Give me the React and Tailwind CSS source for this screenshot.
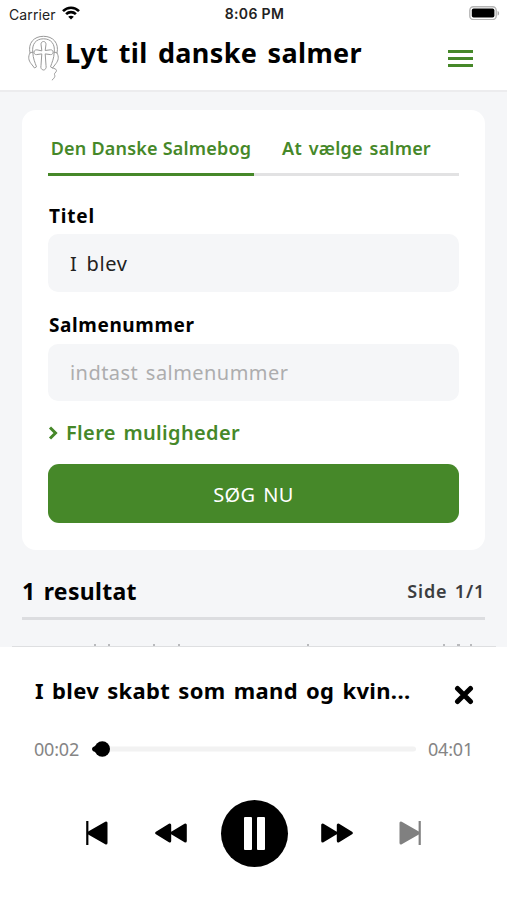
import { useState } from 'react';

function StatusBar() {
  return (
    <div className="grid h-7 grid-cols-3 items-center pl-[9px] pr-[7px] font-['Inter',sans-serif] text-[14px]">
      <div className="flex items-center gap-[6px] text-[#222]">
        <span className="tracking-[0.1px]">Carrier</span>
        <svg className="-mt-[2px]" width="18" height="14" viewBox="0 0 18 14" fill="none" stroke="#000" strokeWidth="2.6">
          <path d="M1 5.2C5.5.6 12.5.6 17 5.2" />
          <path d="M4.1 8.2c2.8-2.8 7-2.8 9.8 0" />
          <path d="M9 13.6 6.2 10.8c1.6-1.5 4-1.5 5.6 0Z" fill="#000" stroke="none" />
        </svg>
      </div>
      <span className="whitespace-nowrap pb-px text-center text-[14px] font-semibold tracking-[0.35px] text-[#222]">8:06 PM</span>
      <svg className="-mt-[2px] justify-self-end" width="31" height="14" viewBox="0 0 31 14">
        <rect x=".8" y=".8" width="26.4" height="12.8" rx="3.6" fill="#fff" stroke="#b5b5b5" strokeWidth="1.4" />
        <rect x="2.8" y="2.6" width="22.6" height="9" rx="1.8" fill="#000" />
        <path d="M28.6 5v4.6c2-.7 2-3.9 0-4.6Z" fill="#aaa" />
      </svg>
    </div>
  );
}

function Logo() {
  return (
    <svg width="32" height="46" viewBox="0 0 32 46" fill="none" stroke="#999" strokeWidth="1" strokeLinecap="round" strokeLinejoin="round">
      <path d="M2 18C-.4 8 6 1.300 15.500 1.300S31.400 8 29 18" />
      <path d="M4.800 17.500C3.500 9 8 3.800 15.500 3.800S27.500 9 26.200 17.500" />
      <path d="M2 18c-2.300 4-1.300 7.500 1 10.500l3.500 4.500 2-1.200C7 27.500 5 23.500 4.800 17.500Z" />
      <path d="M29 18c2.300 4 1.300 7.500-1 10.500L24.500 33l-2-1.200c1.500-4.300 3.500-8.300 3.700-14.300Z" />
      <path d="M13.800 15.500 13 9.200c0-1.500 1-2.700 2.500-2.700S18 7.700 18 9.200l-.8 6.300 5.300-.7c3.500-.2 3.500 5 0 4.800l-5.300-.7.8 11.500c.8 2.700-.8 4.600-2.500 4.600s-3.300-1.900-2.500-4.600l.8-11.500-5.300.7c-3.500.2-3.500-5 0-4.800Z" />
      <path d="M24.500 33c4.500 1 5 2.500 2.500 5-2 2 2.500 2.500-2.800 7" />
    </svg>
  );
}

function Header() {
  return (
    <header className="flex h-[64px] items-start border-b-2 border-[#ececee] pl-7 pr-[34px]">
      <div className="mt-[7px]">
        <Logo />
      </div>
      <h1 className="ml-[5px] mt-[5px] whitespace-nowrap text-[27px] font-bold leading-[40px] tracking-[0.35px] [word-spacing:3px]">Lyt til danske salmer</h1>
      <button className="ml-auto mt-[21.500px] flex w-[25px] flex-col gap-[4px]">
        <span className="h-[3px] bg-[#468829]" />
        <span className="h-[3px] bg-[#468829]" />
        <span className="h-[3px] bg-[#468829]" />
      </button>
    </header>
  );
}

function SearchCard() {
  const [title, setTitle] = useState('I blev');
  const [number, setNumber] = useState('');

  return (
    <section className="mx-[22px] mt-[18px] h-[440px] rounded-[14px] bg-white px-[26px] pt-[17px]">
      {/* Tabs */}
      <div className="flex h-[49px] text-[18px] font-semibold text-[#468829]">
        <button className="w-[206px] whitespace-nowrap border-b-[3px] border-[#468829] pb-[3px] tracking-[0.2px]">Den Danske Salmebog</button>
        <button className="w-[205px] whitespace-nowrap border-b-[3px] border-[#e2e2e3] pb-[3px] tracking-[0.2px] [word-spacing:2px]">At vælge salmer</button>
      </div>

      <label className="mt-[27px] block pl-px text-[19px] font-bold leading-[26px] tracking-[0.8px]">Titel</label>
      <input
        className="mt-[5px] block h-[58px] w-full rounded-[10px] bg-[#f5f6f8] px-[22px] text-[20px] tracking-[0.7px] text-[#222] outline-none [word-spacing:3px]"
        value={title}
        onChange={(e) => setTitle(e.target.value)}
      />

      <label className="mt-[20px] block pl-px text-[19px] font-bold leading-[26px] tracking-[0.6px]">Salmenummer</label>
      <input
        className="mt-[6px] block h-[57px] w-full rounded-[10px] bg-[#f5f6f8] px-[22px] text-[20px] tracking-[0.45px] outline-none [word-spacing:2px] placeholder:text-[#adadae]"
        placeholder="indtast salmenummer"
        value={number}
        onChange={(e) => setNumber(e.target.value)}
      />

      <button className="mt-[18px] flex items-center gap-[8px] text-[20px] font-semibold leading-[28px] tracking-[0.35px] text-[#468829] [word-spacing:2px]">
        <svg width="10" height="14" viewBox="0 0 10 14" fill="none" stroke="currentColor" strokeWidth="3">
          <path d="m2 1.500 5.500 5.500L2 12.500" />
        </svg>
        Flere muligheder
      </button>

      <button className="mt-[17px] block h-[59px] w-full rounded-[11px] bg-[#468829] pt-[2px] text-[20px] tracking-[0.4px] text-white [word-spacing:2px]">SØG NU</button>
    </section>
  );
}

function Results() {
  return (
    <section className="mx-[22px] mt-[21px]">
      <div className="flex h-[49px] items-start justify-between border-b-[3px] border-[#dcdde0]">
        <h2 className="text-[23px] font-bold leading-[40px] tracking-[0.3px] [word-spacing:2px]">1 resultat</h2>
        <span className="text-[18px] font-semibold leading-[40px] tracking-[0.8px] text-[#3c3d40] [word-spacing:2px]">Side 1/1</span>
      </div>
    </section>
  );
}

// Tips of the result row that stays hidden behind the player
function RowEdge() {
  return (
    <svg className="mt-auto block shrink-0" width="507" height="3" viewBox="0 0 507 3" fill="#b9babd">
      <path d="M12 2h484v1H12z" fill="#dedfe1" />
      <path d="M94 0h2v2h-2zM108 0h2v2h-2zM153 0h2v2h-2zM178 0h2v2h-2zM307 0h2v2h-2zM443 0h2v2h-2zM457 0h3v2h-3zM470 0h2v2h-2z" />
    </svg>
  );
}

function Player() {
  return (
    <section className="h-[253px] bg-white pt-[21px]">
      <div className="flex justify-between pl-[35px] pr-[33px]">
        <h3 className="whitespace-nowrap text-[22px] font-bold leading-[44px] tracking-[0.35px] [word-spacing:2px]">I blev skabt som mand og kvin...</h3>
        <svg className="mt-[17px]" width="20" height="20" viewBox="0 0 20 20" stroke="#000" strokeWidth="5" strokeLinecap="round">
          <path d="m3.500 3.500 13 13M16.500 3.500l-13 13" />
        </svg>
      </div>

      {/* Progress */}
      <div className="mt-[22px] flex h-[30px] items-center pl-[34px] pr-[34px] text-[18px] tracking-[-0.2px] text-[#858585]">
        <span className="w-[46px]">00:02</span>
        <svg className="ml-[12px]" width="324" height="16" viewBox="0 0 324 16">
          <rect x="0" y="5.500" width="324" height="5" rx="2.500" fill="#f2f2f2" />
          <path d="M0 8c0-2 2-2.500 4-3.500v7C2 10.500 0 10 0 8Z" fill="#000" />
          <circle cx="10.300" cy="8" r="7.700" fill="#000" />
        </svg>
        <span className="ml-auto">04:01</span>
      </div>

      {/* Controls */}
      <div className="mt-[36px] flex h-[67px] items-center">
        <svg className="mb-px ml-[86px]" width="22" height="26" viewBox="0 0 22 26">
          <path d="M1.300 1v24" stroke="#000" strokeWidth="2.200" />
          <path d="M2.500 13 20 3v20Z" stroke="#000" strokeWidth="3" strokeLinejoin="round" />
        </svg>
        <svg className="mb-px ml-[47px]" width="32" height="20" viewBox="0 0 32 20" stroke="#000" strokeWidth="3" strokeLinejoin="round">
          <path d="m1.700 10 13-8v16ZM17 10l13.300-8v16Z" />
        </svg>
        <div className="ml-[34px] flex h-[67px] w-[67px] items-center justify-center gap-[5px] rounded-full bg-black">
          <span className="h-[33px] w-[8px] rounded-[1px] bg-white" />
          <span className="h-[33px] w-[8px] rounded-[1px] bg-white" />
        </div>
        <svg className="mb-px ml-[33px]" width="32" height="20" viewBox="0 0 32 20" stroke="#000" strokeWidth="3" strokeLinejoin="round">
          <path d="m30.300 10-13-8v16ZM15 10 1.700 2v16Z" />
        </svg>
        <svg className="mb-px ml-[46px]" width="22" height="26" viewBox="0 0 22 26" fill="#808080" stroke="#808080">
          <path d="M20.700 1v24" strokeWidth="2.200" />
          <path d="M19.500 13 2 3v20Z" strokeWidth="3" strokeLinejoin="round" />
        </svg>
      </div>
    </section>
  );
}

export default function App() {
  return (
    <div className="flex h-[900px] w-[507px] flex-col overflow-hidden bg-white font-['Noto_Sans',sans-serif] text-black">
      <StatusBar />
      <Header />
      <main className="flex h-[555px] shrink-0 flex-col bg-[#f5f6f8]">
        <SearchCard />
        <Results />
        <RowEdge />
      </main>
      <Player />
    </div>
  );
}
